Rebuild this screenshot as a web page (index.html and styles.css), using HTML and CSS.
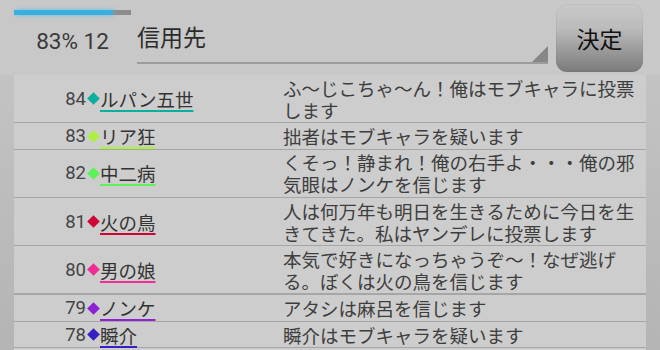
FILE: index.html
```html
<!DOCTYPE html>
<html lang="ja">
<head>
<meta charset="utf-8">
<title>投票</title>
<link rel="stylesheet" href="styles.css">
</head>
<body>
<div class="screen">
  <header class="top">
    <div class="status">
      <div class="progress"><div class="fill" style="width:84%"></div></div>
      <div class="count">83% 12</div>
    </div>
    <div class="field"><span class="field-text">信用先</span><span class="corner"></span></div>
    <button class="decide">決定</button>
  </header>
  <div class="list-wrap">
    <ul class="list">
      <li class="row c-teal"><div class="who"><span class="rank">84</span><span class="mark"></span><span class="name">ルパン五世</span></div><div class="msg">ふ〜じこちゃ〜ん！俺はモブキャラに投票します</div></li>
      <li class="row c-lime"><div class="who"><span class="rank">83</span><span class="mark"></span><span class="name">リア狂</span></div><div class="msg">拙者はモブキャラを疑います</div></li>
      <li class="row c-green"><div class="who"><span class="rank">82</span><span class="mark"></span><span class="name">中二病</span></div><div class="msg">くそっ！静まれ！俺の右手よ・・・俺の邪気眼はノンケを信じます</div></li>
      <li class="row c-red"><div class="who"><span class="rank">81</span><span class="mark"></span><span class="name">火の鳥</span></div><div class="msg">人は何万年も明日を生きるために今日を生きてきた。私はヤンデレに投票します</div></li>
      <li class="row c-pink thick"><div class="who"><span class="rank">80</span><span class="mark"></span><span class="name">男の娘</span></div><div class="msg">本気で好きになっちゃうぞ〜！なぜ逃げる。ぼくは火の鳥を信じます</div></li>
      <li class="row c-purple"><div class="who"><span class="rank">79</span><span class="mark"></span><span class="name">ノンケ</span></div><div class="msg">アタシは麻呂を信じます</div></li>
      <li class="row c-blue"><div class="who"><span class="rank">78</span><span class="mark"></span><span class="name">瞬介</span></div><div class="msg">瞬介はモブキャラを疑います</div></li>
    </ul>
  </div>
</div>
</body>
</html>
```

FILE: styles.css
```css
html, body {
  margin: 0;
  padding: 0;
}

body {
  background: #c8c8c8;
  width: 660px;
  height: 350px;
  overflow: hidden;
  font-family: "Noto Sans CJK JP", sans-serif;
}

.screen {
  display: flex;
  flex-direction: column;
  height: 350px;
}

.top {
  display: flex;
  align-items: flex-start;
  height: 75px;
  padding-left: 14px;
  flex: none;
}

.status {
  width: 117px;
  padding-top: 10px;
  flex: none;
}

.progress {
  height: 5px;
  background: #8c8c8c;
}

.fill {
  height: 100%;
  background: #3aaedd;
  box-shadow: 2px 0 4px rgba(64, 190, 245, 0.8);
}

.count {
  margin-top: 13px;
  text-align: center;
  font-family: Roboto, sans-serif;
  font-size: 22.5px;
  line-height: 26px;
  color: #3a3a3a;
}

.field {
  position: relative;
  flex: 1;
  margin-left: 6px;
  padding-top: 21px;
  height: 41px;
  border-bottom: 2px solid #9c9c9c;
  font-size: 23px;
  line-height: 30px;
  color: #2c2c2c;
}

.corner {
  position: absolute;
  right: 0;
  bottom: 0;
  width: 0;
  height: 0;
  border-left: 16px solid transparent;
  border-bottom: 16px solid #878787;
}

.decide {
  flex: none;
  margin: 4px 17px 0 8px;
  width: 87px;
  height: 68px;
  padding: 0;
  border: none;
  border-radius: 11px;
  background: linear-gradient(to bottom, #c9c9c9 0%, #bcbcbc 35%, #7b7b7b 100%);
  box-shadow: inset 0 0 0 1px rgba(0, 0, 0, 0.04);
  font-family: "Noto Sans CJK JP", sans-serif;
  font-size: 23px;
  color: #111;
  line-height: 30px;
}

.list-wrap {
  flex: 1;
  padding: 0 14px;
  background: linear-gradient(to bottom, #c3c3c3, #b4b4b4);
}

.list {
  margin: 0;
  padding: 0;
  list-style: none;
  background: #cdcdcd;
  height: 100%;
}

.row {
  display: flex;
  padding: 1.8px 0 1.5px;
  border-bottom: 1px solid #a6a6a6;
  font-size: 18.5px;
  line-height: 22px;
}

.row.thick {
  border-bottom-width: 2px;
}

.who {
  flex: none;
  width: 269px;
  display: flex;
  align-items: center;
}

.rank {
  width: 72px;
  text-align: right;
  font-family: Roboto, sans-serif;
  font-size: 18.5px;
  color: #444;
}

.mark {
  width: 9px;
  height: 9px;
  margin: 0 2px 0 3px;
  transform: rotate(45deg);
  background: var(--c);
}

.name {
  color: #333;
  text-decoration: underline;
  text-decoration-color: var(--c);
  text-decoration-thickness: 2px;
  text-underline-offset: 3px;
}

.msg {
  flex: 1;
  color: #3e3e3e;
}

.c-teal { --c: #0cae9e; }
.c-lime { --c: #aef040; }
.c-green { --c: #5ef25a; }
.c-red { --c: #cf0434; }
.c-pink { --c: #ee2e92; }
.c-purple { --c: #8c22d2; }
.c-blue { --c: #3520c4; }
```
